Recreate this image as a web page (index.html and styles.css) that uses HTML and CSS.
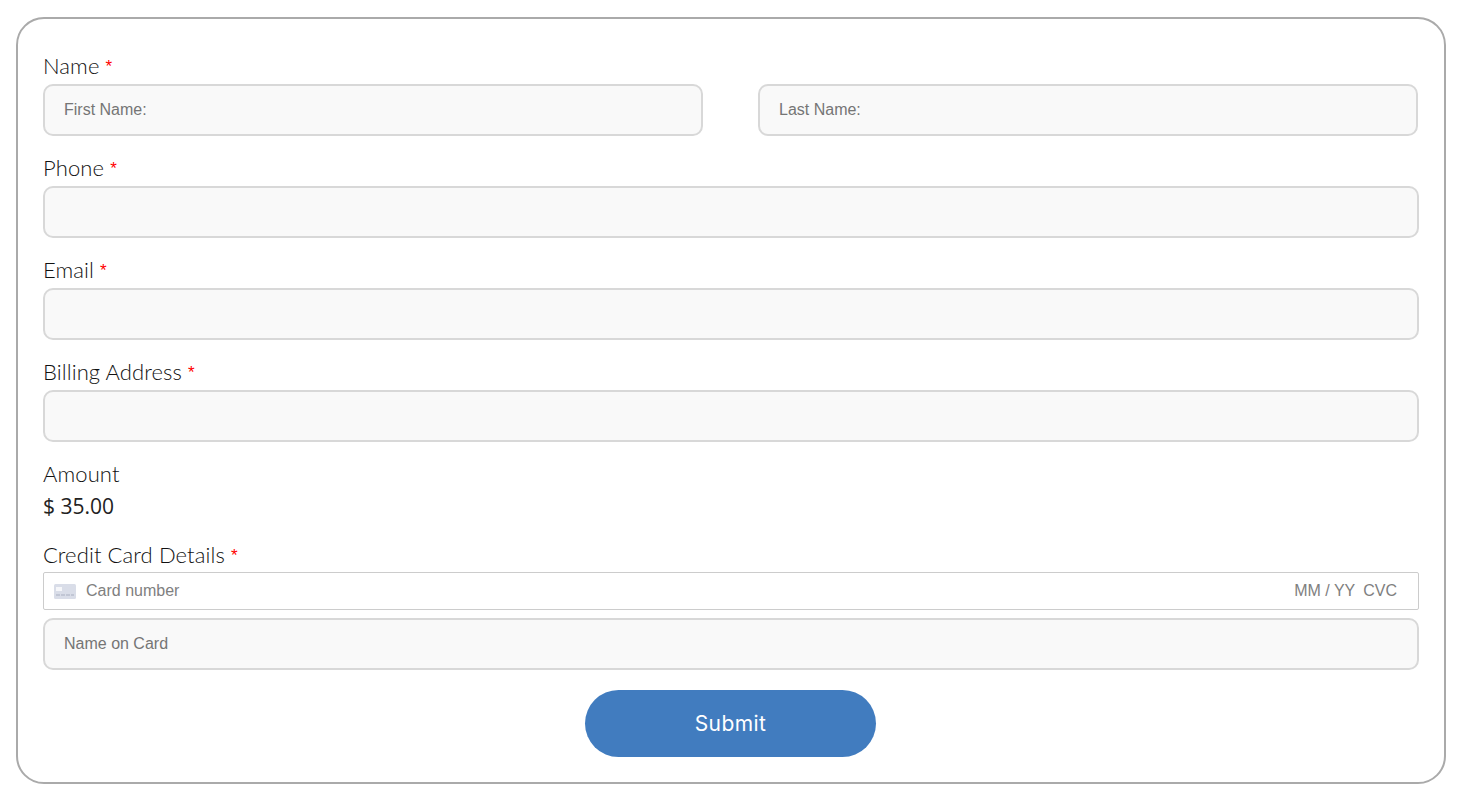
FILE: index.html
```html
<!DOCTYPE html>
<html lang="en">
<head>
  <meta charset="UTF-8">
  <meta name="viewport" content="width=device-width, initial-scale=1.0">
  <title>Payment Form</title>
  <link rel="stylesheet" href="styles.css">
</head>
<body>
  <form class="card">
    <div class="field">
      <label class="field-label">Name <span class="req">*</span></label>
      <div class="name-row">
        <input class="text-input" type="text" placeholder="First Name:">
        <input class="text-input" type="text" placeholder="Last Name:">
      </div>
    </div>

    <div class="field">
      <label class="field-label">Phone <span class="req">*</span></label>
      <input class="text-input" type="text">
    </div>

    <div class="field">
      <label class="field-label">Email <span class="req">*</span></label>
      <input class="text-input" type="text">
    </div>

    <div class="field">
      <label class="field-label">Billing Address <span class="req">*</span></label>
      <input class="text-input" type="text">
    </div>

    <div class="field amount-field">
      <label class="field-label">Amount</label>
      <div class="amount">$ 35.00</div>
    </div>

    <div class="field card-field">
      <label class="field-label">Credit Card Details <span class="req">*</span></label>
      <div class="card-input">
        <svg class="card-icon" width="22" height="15" viewBox="0 0 22 15">
          <rect width="22" height="15" rx="1.5" fill="#d9dde8"/>
          <rect x="2" y="3" width="6" height="4" fill="#f6f7fa"/>
          <path d="M2 11h4M7 11h4M12 11h4M17 11h3" stroke="#aab0bf" stroke-width="1.2"/>
        </svg>
        <span class="card-number">Card number</span>
        <span class="card-expiry">MM / YY</span>
        <span class="card-cvc">CVC</span>
      </div>
      <input class="text-input" type="text" placeholder="Name on Card">
    </div>

    <div class="submit-row">
      <button class="submit-btn" type="submit">Submit</button>
    </div>
  </form>
</body>
</html>
```

FILE: styles.css
```css
body {
  margin: 0;
  padding: 17px 15px 15px 16px;
  background-color: #fff;
  font-family: 'Lato', sans-serif;
}

.card {
  box-sizing: border-box;
  height: 767px;
  padding: 35px 25px 0 25px;
  border: 2px solid #aaa;
  border-radius: 28px;
}

.field {
  margin-bottom: 20px;
}

.field-label {
  display: block;
  height: 30px;
  line-height: 24px;
  font-size: 22px;
  font-weight: 300;
  letter-spacing: 0.1px;
  color: #111;
}

.req {
  color: #f00;
  font-family: 'Liberation Sans', Arial, sans-serif;
  font-size: 17px;
  vertical-align: 2px;
}

.name-row {
  display: flex;
  gap: 55px;
  padding-right: 1px;
}

.text-input {
  display: block;
  box-sizing: border-box;
  width: 100%;
  min-width: 0;
  height: 52px;
  padding: 0 19px;
  border: 2px solid #d8d8d8;
  border-radius: 10px;
  background-color: #f9f9f9;
  font-family: 'Liberation Sans', Arial, sans-serif;
  font-size: 16px;
}

.text-input::placeholder {
  color: #757575;
  opacity: 1;
}

.amount-field {
  margin-bottom: 18px;
}

.amount {
  height: 33px;
  line-height: 29px;
  font-family: 'Open Sans', sans-serif;
  font-size: 21px;
  color: #222;
}

.card-field .field-label {
  height: 29px;
}

.card-input {
  display: flex;
  align-items: center;
  box-sizing: border-box;
  height: 38px;
  margin-bottom: 8px;
  padding: 0 21px 0 10px;
  border: 1px solid #ccc;
  border-radius: 2px;
  font-family: 'Liberation Sans', Arial, sans-serif;
  font-size: 16px;
  color: #808080;
}

.card-icon {
  flex: none;
  margin-right: 10px;
}

.card-number {
  flex: 1;
}

.card-cvc {
  margin-left: 8px;
}

.submit-row {
  display: flex;
  justify-content: center;
  padding-right: 1px;
}

.submit-btn {
  width: 291px;
  height: 67px;
  border: none;
  border-radius: 34px;
  background-color: #417cbf;
  color: #fff;
  font-family: 'Inter', sans-serif;
  font-size: 21px;
  letter-spacing: 0.4px;
  cursor: pointer;
}
```
